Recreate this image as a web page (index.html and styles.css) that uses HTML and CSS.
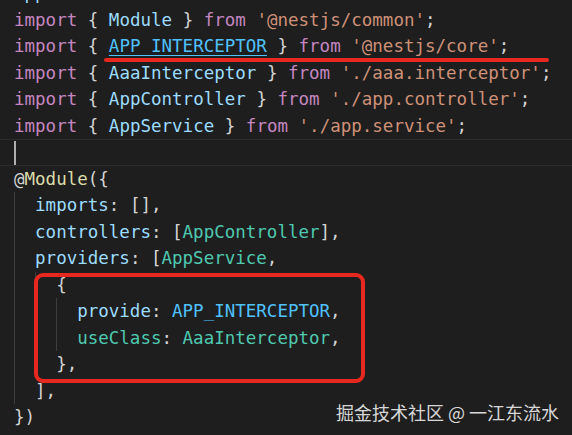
FILE: index.html
```html
<!DOCTYPE html>
<html>
<head>
<meta charset="utf-8">
<link rel="stylesheet" href="styles.css">
</head>
<body>
<div class="editor">
  <div class="code">
    <div class="ln"><span class="v">app</span><span class="p">.</span><span class="v">module</span><span class="p">.</span><span class="v">ts</span></div>
    <div class="ln"><span class="k">import</span> <span class="p">{</span> <span class="v">Module</span> <span class="p">}</span> <span class="k">from</span> <span class="s">'@nestjs/common'</span><span class="p">;</span></div>
    <div class="ln"><span class="k">import</span> <span class="p">{</span> <span class="c link">APP_INTERCEPTOR</span> <span class="p">}</span> <span class="k">from</span> <span class="s">'@nestjs/core'</span><span class="p">;</span></div>
    <div class="ln"><span class="k">import</span> <span class="p">{</span> <span class="v">AaaInterceptor</span> <span class="p">}</span> <span class="k">from</span> <span class="s">'./aaa.interceptor'</span><span class="p">;</span></div>
    <div class="ln"><span class="k">import</span> <span class="p">{</span> <span class="v">AppController</span> <span class="p">}</span> <span class="k">from</span> <span class="s">'./app.controller'</span><span class="p">;</span></div>
    <div class="ln"><span class="k">import</span> <span class="p">{</span> <span class="v">AppService</span> <span class="p">}</span> <span class="k">from</span> <span class="s">'./app.service'</span><span class="p">;</span></div>
    <div class="ln current"><span class="cursor"></span></div>
    <div class="ln"><span class="p">@</span><span class="f">Module</span><span class="p">({</span></div>
    <div class="ln"><span class="ig"></span><span class="v">imports</span><span class="p">: [],</span></div>
    <div class="ln"><span class="ig"></span><span class="v">controllers</span><span class="p">: [</span><span class="t">AppController</span><span class="p">],</span></div>
    <div class="ln"><span class="ig"></span><span class="v">providers</span><span class="p">: [</span><span class="t">AppService</span><span class="p">,</span></div>
    <div class="ln"><span class="ig"></span><span class="ig"></span><span class="p">{</span></div>
    <div class="ln"><span class="ig"></span><span class="ig"></span><span class="ig"></span><span class="v">provide</span><span class="p">: </span><span class="c">APP_INTERCEPTOR</span><span class="p">,</span></div>
    <div class="ln"><span class="ig"></span><span class="ig"></span><span class="ig"></span><span class="t">useClass</span><span class="p">: </span><span class="t">AaaInterceptor</span><span class="p">,</span></div>
    <div class="ln"><span class="ig"></span><span class="ig"></span><span class="p">},</span></div>
    <div class="ln"><span class="ig"></span><span class="p">],</span></div>
    <div class="ln"><span class="p">})</span></div>
  </div>
  <div class="underline-mark"></div>
  <div class="box-mark"></div>
  <div class="watermark">掘金技术社区 @ 一江东流水</div>
</div>
</body>
</html>
```

FILE: styles.css
```css
html, body {
  margin: 0;
  padding: 0;
  background: #1e1e1e;
}
.editor {
  position: relative;
  width: 572px;
  height: 435px;
  overflow: hidden;
  background: #1e1e1e;
}
.code {
  margin-top: -19.75px;
  padding-left: 14px;
  font-family: "DejaVu Sans Mono", "Liberation Mono", monospace;
  font-size: 17.5px;
  line-height: 26.5px;
  color: #d4d4d4;
}
.ln {
  display: block;
  height: 26.5px;
  line-height: 26.5px;
  white-space: pre;
}
.current {
  margin-left: -14px;
  padding-left: 14px;
  box-sizing: border-box;
  border-top: 1px solid #2c2c2c;
  border-bottom: 1px solid #2c2c2c;
  display: flex;
  align-items: center;
}
.cursor {
  display: block;
  width: 2px;
  height: 24px;
  background: #aeafad;
}
.ig {
  display: inline-block;
  vertical-align: top;
  width: 2ch;
  height: 26.5px;
  box-shadow: inset 1px 0 0 #3e3e3e;
}
.k { color: #c586c0; }
.v { color: #9cdcfe; }
.c { color: #4fc1ff; }
.s { color: #ce9178; }
.t { color: #4ec9b0; }
.f { color: #dcdcaa; }
.p { color: #d4d4d4; }
.link {
  text-decoration: underline;
  text-decoration-thickness: 1px;
  text-underline-offset: 3px;
}
.underline-mark {
  position: absolute;
  left: 104px;
  top: 58px;
  width: 445px;
  height: 4px;
  border-radius: 2px;
  background: #e8281f;
}
.box-mark {
  position: absolute;
  left: 34px;
  top: 273px;
  width: 331px;
  height: 110px;
  box-sizing: border-box;
  border: 4px solid #e8281f;
  border-radius: 9px;
}
.watermark {
  position: absolute;
  left: 336px;
  top: 401px;
  font-family: "Noto Sans CJK SC", "Noto Sans", sans-serif;
  font-size: 18px;
  line-height: 22px;
  color: #d8d8d8;
  white-space: nowrap;
}
```
